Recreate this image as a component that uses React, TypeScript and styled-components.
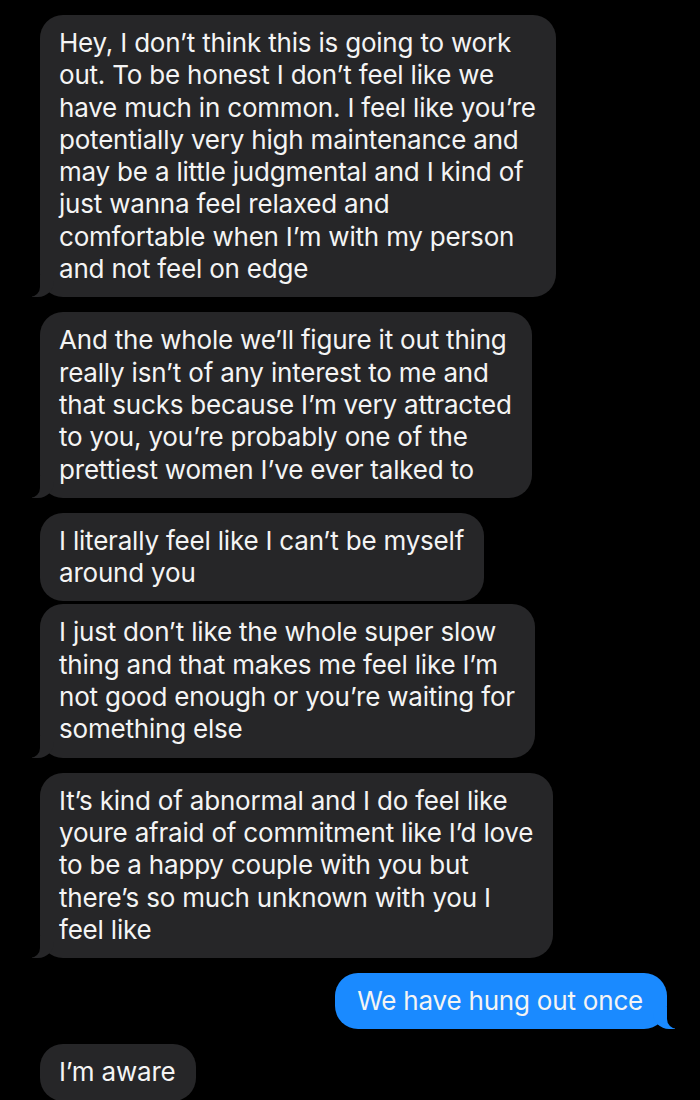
import React from "react";
import styled, { createGlobalStyle, css } from "styled-components";

const GlobalStyle = createGlobalStyle`
  html, body {
    margin: 0;
    padding: 0;
    background: #000;
  }
  body {
    font-family: Inter, "Open Sans", "Liberation Sans", sans-serif;
    -webkit-font-smoothing: antialiased;
  }
`;

const Screen = styled.div`
  width: 700px;
  height: 1100px;
  background: #000;
  overflow: hidden;
  display: flex;
  flex-direction: column;
  padding: 15px 33px 0 40px;
  box-sizing: border-box;
`;

const Row = styled.div<{ $mine?: boolean; $tight?: boolean }>`
  display: flex;
  justify-content: ${(p) => (p.$mine ? "flex-end" : "flex-start")};
  margin-top: ${(p) => (p.$tight ? "3px" : "15px")};
  &:first-child {
    margin-top: 0;
  }
`;

const Bubble = styled.div<{ $mine?: boolean; $tail?: boolean }>`
  position: relative;
  box-sizing: border-box;
  padding: ${(p) => (p.$mine ? "12px 24px 12px 22px" : "12px 20px 12px 19px")};
  border-radius: 23px;
  font-size: 26px;
  line-height: 32.3px;
  letter-spacing: -0.2px;
  color: #f4f4f4;
  background: ${(p) => (p.$mine ? "#1a8aff" : "#262628")};
  white-space: nowrap;

  ${(p) =>
    p.$tail &&
    !p.$mine &&
    css`
      &::before {
        content: "";
        position: absolute;
        bottom: 0;
        left: -8px;
        width: 22px;
        height: 22px;
        background: #262628;
        border-bottom-right-radius: 16px;
      }
      &::after {
        content: "";
        position: absolute;
        bottom: 0;
        left: -12px;
        width: 12px;
        height: 22px;
        background: #000;
        border-bottom-right-radius: 10px;
      }
    `}

  ${(p) =>
    p.$tail &&
    p.$mine &&
    css`
      &::before {
        content: "";
        position: absolute;
        bottom: 0;
        right: -8px;
        width: 22px;
        height: 22px;
        background: #1a8aff;
        border-bottom-left-radius: 16px;
      }
      &::after {
        content: "";
        position: absolute;
        bottom: 0;
        right: -12px;
        width: 12px;
        height: 22px;
        background: #000;
        border-bottom-left-radius: 10px;
      }
    `}
`;

const Line = styled.span`
  display: block;
  position: relative;
  z-index: 1;
`;

const BottomEdge = styled.div`
  margin-top: 2px;
  height: 2px;
  margin-left: -40px;
  margin-right: -33px;
  background: #111113;
`;

type Msg = { lines: string[]; mine?: boolean; tail?: boolean; tight?: boolean };

const messages: Msg[] = [
  {
    lines: [
      "Hey, I don’t think this is going to work",
      "out. To be honest I don’t feel like we",
      "have much in common. I feel like you’re",
      "potentially very high maintenance and",
      "may be a little judgmental and I kind of",
      "just wanna feel relaxed and",
      "comfortable when I’m with my person",
      "and not feel on edge",
    ],
    tail: true,
  },
  {
    lines: [
      "And the whole we’ll figure it out thing",
      "really isn’t of any interest to me and",
      "that sucks because I’m very attracted",
      "to you, you’re probably one of the",
      "prettiest women I’ve ever talked to",
    ],
    tail: true,
  },
  {
    lines: ["I literally feel like I can’t be myself", "around you"],
  },
  {
    lines: [
      "I just don’t like the whole super slow",
      "thing and that makes me feel like I’m",
      "not good enough or you’re waiting for",
      "something else",
    ],
    tail: true,
    tight: true,
  },
  {
    lines: [
      "It’s kind of abnormal and I do feel like",
      "youre afraid of commitment like I’d love",
      "to be a happy couple with you but",
      "there’s so much unknown with you I",
      "feel like",
    ],
    tail: true,
  },
  { lines: ["We have hung out once"], mine: true, tail: true },
  { lines: ["I’m aware"] },
];

export default function App() {
  return (
    <>
      <GlobalStyle />
      <Screen>
        {messages.map((m, i) => (
          <Row key={i} $mine={m.mine} $tight={m.tight}>
            <Bubble $mine={m.mine} $tail={m.tail}>
              {m.lines.map((l, j) => (
                <Line key={j}>{l}</Line>
              ))}
            </Bubble>
          </Row>
        ))}
        <BottomEdge />
      </Screen>
    </>
  );
}
